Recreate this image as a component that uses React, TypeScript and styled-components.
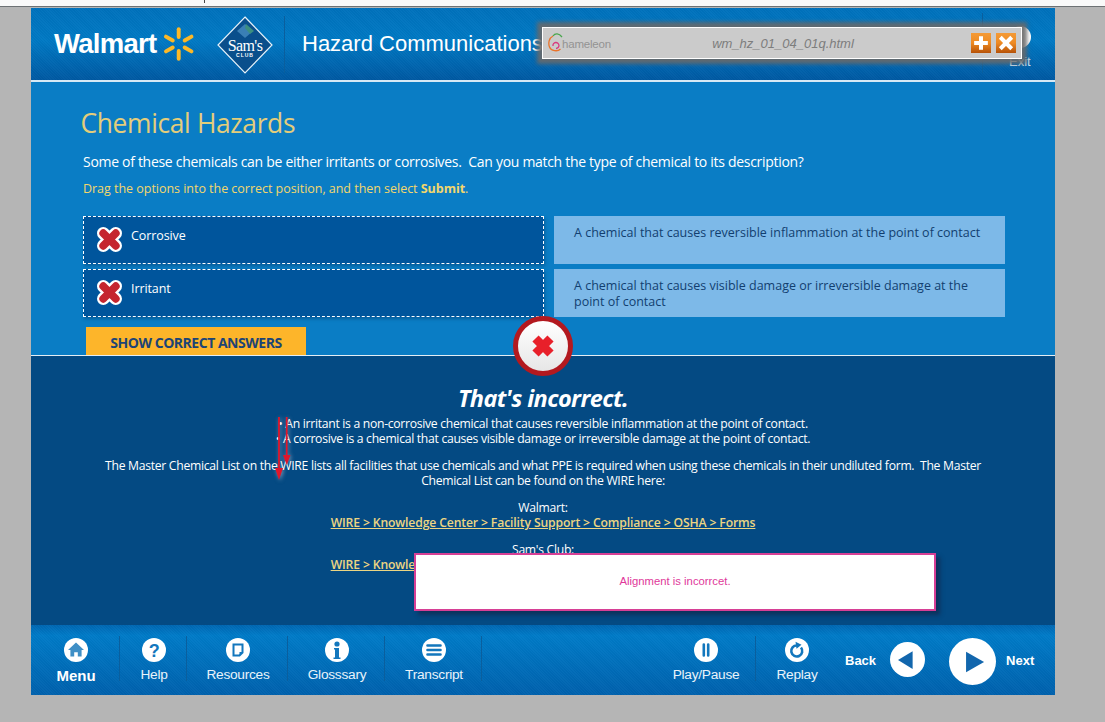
import React from "react";
import styled, { createGlobalStyle } from "styled-components";

const Global = createGlobalStyle`
  html, body { margin: 0; padding: 0; background: #b5b5b5; width: 1105px; height: 722px; overflow: hidden; }
  body { font-family: "Open Sans", "Liberation Sans", sans-serif; }
`;
const Page = styled.div`width: 1105px; height: 722px; position: relative; overflow: hidden; display: flex; flex-direction: column;`;
const TopStrip = styled.div`height: 6px; background: #f9f9f9; border-bottom: 1px solid #6d7174; position: relative; flex: none;`;
const Tick = styled.span`position: absolute; left: 204px; top: 0; width: 1px; height: 3px; background: #444;`;
const Course = styled.div`width: 1024px; margin: 1px 0 0 31px; display: flex; flex-direction: column; flex: none;`;
const stripes = `repeating-linear-gradient(45deg, rgba(255,255,255,.018) 0 1px, rgba(0,0,0,.018) 1px 2px)`;
const Header = styled.header`
  height: 72px; flex: none; display: flex; align-items: center; position: relative;
  background: ${stripes}, linear-gradient(#0071bc, #0079c4 45%, #0059a2);
  border-bottom: 2px solid #d6e9f5; box-sizing: content-box;
`;
const WalmartBlock = styled.div`display: flex; align-items: center; width: 164px; padding-left: 23px; box-sizing: border-box; gap: 5px;`;
const WalmartWord = styled.span`font: 700 27.5px/1 "Liberation Sans", sans-serif; color: #fff; letter-spacing: -.7px;`;
const SamsBlock = styled.div`width: 90px; height: 57px; margin-top: 1px; display: flex; justify-content: flex-start; border-right: 1px solid #0a5f9e; box-sizing: border-box; padding-left: 22px;`;
const CourseTitle = styled.h1`margin: 0 0 0 17px; font: 400 22px/1 "Liberation Sans", sans-serif; color: #fff; white-space: nowrap;`;
const ExitDisc = styled.div`position: absolute; left: 978px; top: 18px; width: 22px; height: 22px; border-radius: 50%; background: #fff;`;
const ExitBlock = styled.div`position: absolute; left: 978px; top: 47px; font: 400 13px/1 "Liberation Sans", sans-serif; color: #cfe5f5;`;
const ExitRule = styled.div`position: absolute; left: 951px; top: 5px; width: 1px; height: 60px; background: #0a5f9e;`;
const Body = styled.main`height: 273px; flex: none; background: #0a7dc5; box-sizing: border-box; padding: 25px 50px 0 50px; overflow: hidden; position: relative;`;
const Heading = styled.h2`margin: 0 0 0 -.5px; font: 400 26.4px/32px "Open Sans", sans-serif; letter-spacing: -.35px; color: #e3cd7b;`;
const Lead = styled.p`margin: 13px 0 0 2px; font: 400 14px/20px "Open Sans", sans-serif; letter-spacing: -.3px; color: #fff;`;
const Hint = styled.p`margin: 8px 0 0 2px; font: 400 12.5px/18px "Open Sans", sans-serif; letter-spacing: -.03px; color: #f2d76d; b { font-weight: 700; }`;
const MatchGrid = styled.div`margin: 18px 0 0 2px; display: grid; grid-template-columns: 461px 451px; column-gap: 10px; row-gap: 5px;`;
const Answer = styled.div`
  height: 48px; box-sizing: border-box; background: #00559c; border: 1px dashed #fff; display: flex; align-items: flex-start; padding: 10px 0 0 13px; gap: 9px;
  box-shadow: 1px 2px 3px rgba(0,40,80,.35); color: #fff; font: 400 12.5px/16px "Open Sans", sans-serif;
`;
const AnswerLabel = styled.span`display: block; letter-spacing: -.1px; margin-top: 1px;`;
const Definition = styled.div`
  height: 48px; box-sizing: border-box; background: #7db9e8; padding: 9px 20px 0; color: #123f70; font: 400 12.5px/16px "Open Sans", sans-serif; letter-spacing: 0;
`;
const ShowButton = styled.button`
  display: block; margin: 10px 0 0 5px; width: 220px; height: 28px; border: 0; padding: 4px 0 0; background: #fdb52a; color: #1c4476;
  font: 700 14px/20px "Open Sans", sans-serif; letter-spacing: -.48px; text-align: center;
`;
const Feedback = styled.section`
  height: 270px; flex: none; box-sizing: border-box; background: #044a83; border-top: 1px solid #e4eef5; padding-top: 27px; text-align: center; color: #fff; font: 400 12.2px/15px "Open Sans", sans-serif; letter-spacing: -.3px; overflow: hidden;
`;
const Verdict = styled.h3`margin: 0 0 3px; font: italic 700 23.5px/30px "Open Sans", sans-serif; letter-spacing: -.6px; color: #fff;`;
const Para = styled.p`margin: 0 auto 12px; width: 900px;`;
const LinkLine = styled.a`display: block; color: #ecd582; text-decoration: underline; font-weight: 600; letter-spacing: -.14px;`;
const LinkBlock = styled.div`margin-bottom: 12px;`;
const Footer = styled.footer`
  height: 70px; flex: none; display: flex; position: relative;
  background: ${stripes}, linear-gradient(#0067b3, #007bc8 15%, #0061ad 100%);
`;
const NavGroup = styled.nav<{ $shift?: number }>`display: flex; padding-top: 11px; margin-right: ${p => p.$shift ?? 0}px;`;
const NavItem = styled.div<{ $w: number; $plain?: boolean }>`
  width: ${p => p.$w}px; height: 45px; padding: 2px 0 0 2px; display: flex; flex-direction: column; align-items: center; gap: 3px; color: #e9f3fa; font: 400 13.7px/19px "Liberation Sans", sans-serif; letter-spacing: -.25px;
  border-right: ${p => (p.$plain ? "0" : "1px solid #0a5f9e")}; box-sizing: border-box;
`;
const Strong = styled.span`font-weight: 700; font-size: 15px; color: #fff; letter-spacing: 0; margin-top: 1px;`;
const Spacer = styled.div`flex: 1;`;
const BackNext = styled.div`display: flex; align-items: flex-start; padding-top: 13px; color: #fff; font: 700 13px/17px "Liberation Sans", sans-serif; width: 210px;`;
const BackLabel = styled.span`margin: 14px 14px 0 0;`;
const BackDisc = styled.span`display: block; margin: 4px 24px 0 0; height: 35px;`;
const NextLabel = styled.span`margin: 14px 0 0 10px;`;
const ChamBar = styled.div`
  position: absolute; left: 542px; top: 27px; width: 480px; height: 32px; box-sizing: border-box; background: #cbcbcb; border: 1px solid #fff;
  box-shadow: 0 0 4px 5px rgba(105,105,105,.9); display: flex; align-items: center; padding: 0 5px;
`;
const ChamLogo = styled.div`display: flex; align-items: center; width: 146px; font: 400 11.5px/1 "Liberation Sans", sans-serif; color: #939393; letter-spacing: -.2px;`;
const ChamName = styled.span`margin-left: -1px; margin-top: 4px;`;
const ChamFile = styled.div`width: 178px; text-align: center; font: italic 400 13px/1 "Liberation Sans", sans-serif; color: #7d7d7d;`;
const ChamActions = styled.div`margin-left: auto; display: flex; gap: 5px;`;
const ChamBtn = styled.div`width: 20px; height: 20px; background: linear-gradient(#f49a35, #ee8a22 50%, #b65208); display: flex; align-items: center; justify-content: center;`;
const Toast = styled.div`
  position: absolute; left: 414px; top: 553px; width: 522px; height: 58px; box-sizing: border-box; background: #fff; border: 2px solid #d73f95;
  box-shadow: 4px 4px 4px rgba(20,30,60,.55); display: flex; align-items: center; justify-content: center; padding-bottom: 1px; color: #e0389a; font: 400 11.3px/1 "Liberation Sans", sans-serif;
`;
const ErrorBadge = styled.div`
  position: absolute; left: 513px; top: 316px; width: 60px; height: 60px; box-sizing: border-box; border-radius: 50%; border: 5px solid #b3191f; background: linear-gradient(#fff, #e6e6e6); display: flex; align-items: center; justify-content: center;
`;
const Arrows = styled.svg`position: absolute; left: 270px; top: 412px; filter: drop-shadow(1px 1px 2px rgba(200,200,210,.6));`;

const XMark = ({ size, fill, stroke }: { size: number; fill: string; stroke?: string }) => (
  <svg width={size} height={size} viewBox="0 0 24 24">
    {stroke && <path d="M6 6 18 18M18 6 6 18" stroke={stroke} strokeWidth="12" strokeLinecap="round" />}
    <path d="M6 6 18 18M18 6 6 18" stroke={fill} strokeWidth={stroke ? 7.5 : 7} strokeLinecap={stroke ? "round" : "butt"} />
  </svg>
);
const Spark = () => (
  <svg width="34" height="36" viewBox="-17 -18 34 36">
    {[0, 60, 120, 180, 240, 300].map(a => (
      <rect key={a} x="-2" y="-17" width="4" height="12" rx="2" fill="#fcb827" transform={`rotate(${a})`} />
    ))}
  </svg>
);
const Diamond = () => (
  <svg width="56" height="58" viewBox="0 0 56 58">
    <path d="M28 1 55 29 28 57 1 29Z" fill="#0a4f8c" stroke="#e6f2fa" strokeWidth="1.2" />
    <path d="M28 8 36 15 28 22 20 15Z" fill="#3a7fb5" />
    <path d="M29 8 37 15 33 18 28 12Z" fill="#3c8f80" />
    <text x="28" y="35" textAnchor="middle" fontFamily="'Liberation Serif', serif" fontSize="16" fill="#fff" letterSpacing="-.6">Sam's</text>
    <text x="28" y="41" textAnchor="middle" fontFamily="'Liberation Sans', sans-serif" fontSize="5" fontWeight="700" fill="#fff" letterSpacing="1">CLUB</text>
  </svg>
);
const Disc = ({ children, size = 24 }: { children: React.ReactNode; size?: number }) => (
  <svg width={size} height={size} viewBox="0 0 24 24" style={{ flex: "none" }}>
    <circle cx="12" cy="12" r="12" fill="#fff" />
    {children}
  </svg>
);
const Blue = "#1377bd";
const Home = () => <Disc><path d="M12 4.500 20 12h-2.400v6.500h-3.800v-4.300h-3.600v4.300H6.400V12H4Z" fill="#3f8fc6" /></Disc>;
const Help = () => <Disc><text x="12" y="19" textAnchor="middle" fontFamily="'Liberation Sans', sans-serif" fontWeight="700" fontSize="18" fill={Blue}>?</text></Disc>;
const Res = () => <Disc><path d="M7.500 6.500h9v8l-3 3h-6Z" fill="none" stroke={Blue} strokeWidth="2" /><path d="M13.500 17l3-3h-3Z" fill={Blue} /></Disc>;
const Info = () => <Disc><circle cx="12" cy="6" r="2.600" fill={Blue} /><path d="M9 10h5v9.500h1.500V21h-7v-1.500H10v-8H9Z" fill={Blue} /></Disc>;
const Lines = () => <Disc><path d="M5.500 7.500h13M5.500 12h13M5.500 16.500h13" stroke={Blue} strokeWidth="2.600" strokeLinecap="round" /></Disc>;
const Pause = () => <Disc><path d="M9.800 6.500v11M14.200 6.500v11" stroke={Blue} strokeWidth="2.600" strokeLinecap="round" /></Disc>;
const Replay = () => <Disc><path d="M16 9.500a5.500 5.500 0 1 1-4-2" fill="none" stroke={Blue} strokeWidth="2.600" /><path d="M10.500 3.800 16.500 6.800 11.500 10.800Z" fill={Blue} /></Disc>;

const Chameleon = () => (
  <svg width="15" height="20" viewBox="0 0 15 20">
    <path d="M5 3C1 5 0 10 1.500 14c1.500 4 8 5 11 2" fill="none" stroke="#e9742b" strokeWidth="1.300" />
    <path d="M5 13a3 3 0 1 1 3 2.500" fill="none" stroke="#d8397e" strokeWidth="1.300" />
    <path d="M5 3c2-3 6-3 9 1" fill="none" stroke="#49a64d" strokeWidth="1.300" />
  </svg>
);

export default function App() {
  return (
    <Page>
      <Global />
      <TopStrip><Tick /></TopStrip>
      <Course>
        <Header>
          <WalmartBlock>
            <WalmartWord>Walmart</WalmartWord>
            <Spark />
          </WalmartBlock>
          <SamsBlock><Diamond /></SamsBlock>
          <CourseTitle>Hazard Communications</CourseTitle>
          <ExitRule />
          <ExitDisc />
          <ExitBlock>Exit</ExitBlock>
        </Header>
        <Body>
          <Heading>Chemical Hazards</Heading>
          <Lead>Some of these chemicals can be either irritants or corrosives.&nbsp; Can you match the type of chemical to its description?</Lead>
          <Hint>Drag the options into the correct position, and then select <b>Submit</b>.</Hint>
          <MatchGrid>
            <Answer><XMark size={25} fill="#c5252f" stroke="#fff" /><AnswerLabel>Corrosive</AnswerLabel></Answer>
            <Definition>A chemical that causes reversible inflammation at the point of contact</Definition>
            <Answer><XMark size={25} fill="#c5252f" stroke="#fff" /><AnswerLabel>Irritant</AnswerLabel></Answer>
            <Definition>A chemical that causes visible damage or irreversible damage at the point of contact</Definition>
          </MatchGrid>
          <ShowButton>SHOW CORRECT ANSWERS</ShowButton>
        </Body>
        <Feedback>
          <Verdict>That's incorrect.</Verdict>
          <Para>• An irritant is a non-corrosive chemical that causes reversible inflammation at the point of contact.<br />• A corrosive is a chemical that causes visible damage or irreversible damage at the point of contact.</Para>
          <Para>The Master Chemical List on the WIRE lists all facilities that use chemicals and what PPE is required when using these chemicals in their undiluted form.&nbsp; The Master Chemical List can be found on the WIRE here:</Para>
          <LinkBlock>Walmart:<LinkLine>WIRE &gt; Knowledge Center &gt; Facility Support &gt; Compliance &gt; OSHA &gt; Forms</LinkLine></LinkBlock>
          <LinkBlock>Sam's Club:<LinkLine>WIRE &gt; Knowledge Center &gt; Facility Support &gt; Compliance &gt; OSHA &gt; Forms</LinkLine></LinkBlock>
        </Feedback>
        <Footer>
          <NavGroup>
            <NavItem $w={89}><Home /><Strong>Menu</Strong></NavItem>
            <NavItem $w={67}><Help />Help</NavItem>
            <NavItem $w={101}><Res />Resources</NavItem>
            <NavItem $w={97}><Info />Glosssary</NavItem>
            <NavItem $w={97}><Lines />Transcript</NavItem>
          </NavGroup>
          <Spacer />
          <NavGroup $shift={9}>
            <NavItem $w={101}><Pause />Play/Pause</NavItem>
            <NavItem $w={80} $plain><Replay />Replay</NavItem>
          </NavGroup>
          <BackNext>
            <BackLabel>Back</BackLabel>
            <BackDisc><Disc size={35}><path d="M5.500 12.400 15.500 6.400V18.500Z" fill="#1266ad" /></Disc></BackDisc>
            <Disc size={47}><path d="M8.700 7 17.900 12.300 8.700 17.500Z" fill="#1266ad" /></Disc>
            <NextLabel>Next</NextLabel>
          </BackNext>
        </Footer>
      </Course>
      <ChamBar>
        <ChamLogo><Chameleon /><ChamName>hameleon</ChamName></ChamLogo>
        <ChamFile>wm_hz_01_04_01q.html</ChamFile>
        <ChamActions>
          <ChamBtn><svg width="16" height="16" viewBox="0 0 14 14"><path d="M7 1v12M1 7h12" stroke="#fff" strokeWidth="3.500" /></svg></ChamBtn>
          <ChamBtn><svg width="16" height="16" viewBox="0 0 14 14"><path d="M2 2l10 10M12 2 2 12" stroke="#fff" strokeWidth="3.500" /></svg></ChamBtn>
        </ChamActions>
      </ChamBar>
      <ErrorBadge><XMark size={30} fill="#e8202a" /></ErrorBadge>
      <Arrows width="26" height="72" viewBox="0 0 26 72">
        <path d="M16.700 5V45" stroke="#e0162b" strokeWidth="1.800" />
        <path d="M13 43H20.500L16.700 53Z" fill="#e0162b" />
        <path d="M9 5V60" stroke="#e0162b" strokeWidth="1.800" />
        <path d="M5 56H13L9 68Z" fill="#e0162b" />
      </Arrows>
      <Toast>Alignment is incorrcet.</Toast>
    </Page>
  );
}
